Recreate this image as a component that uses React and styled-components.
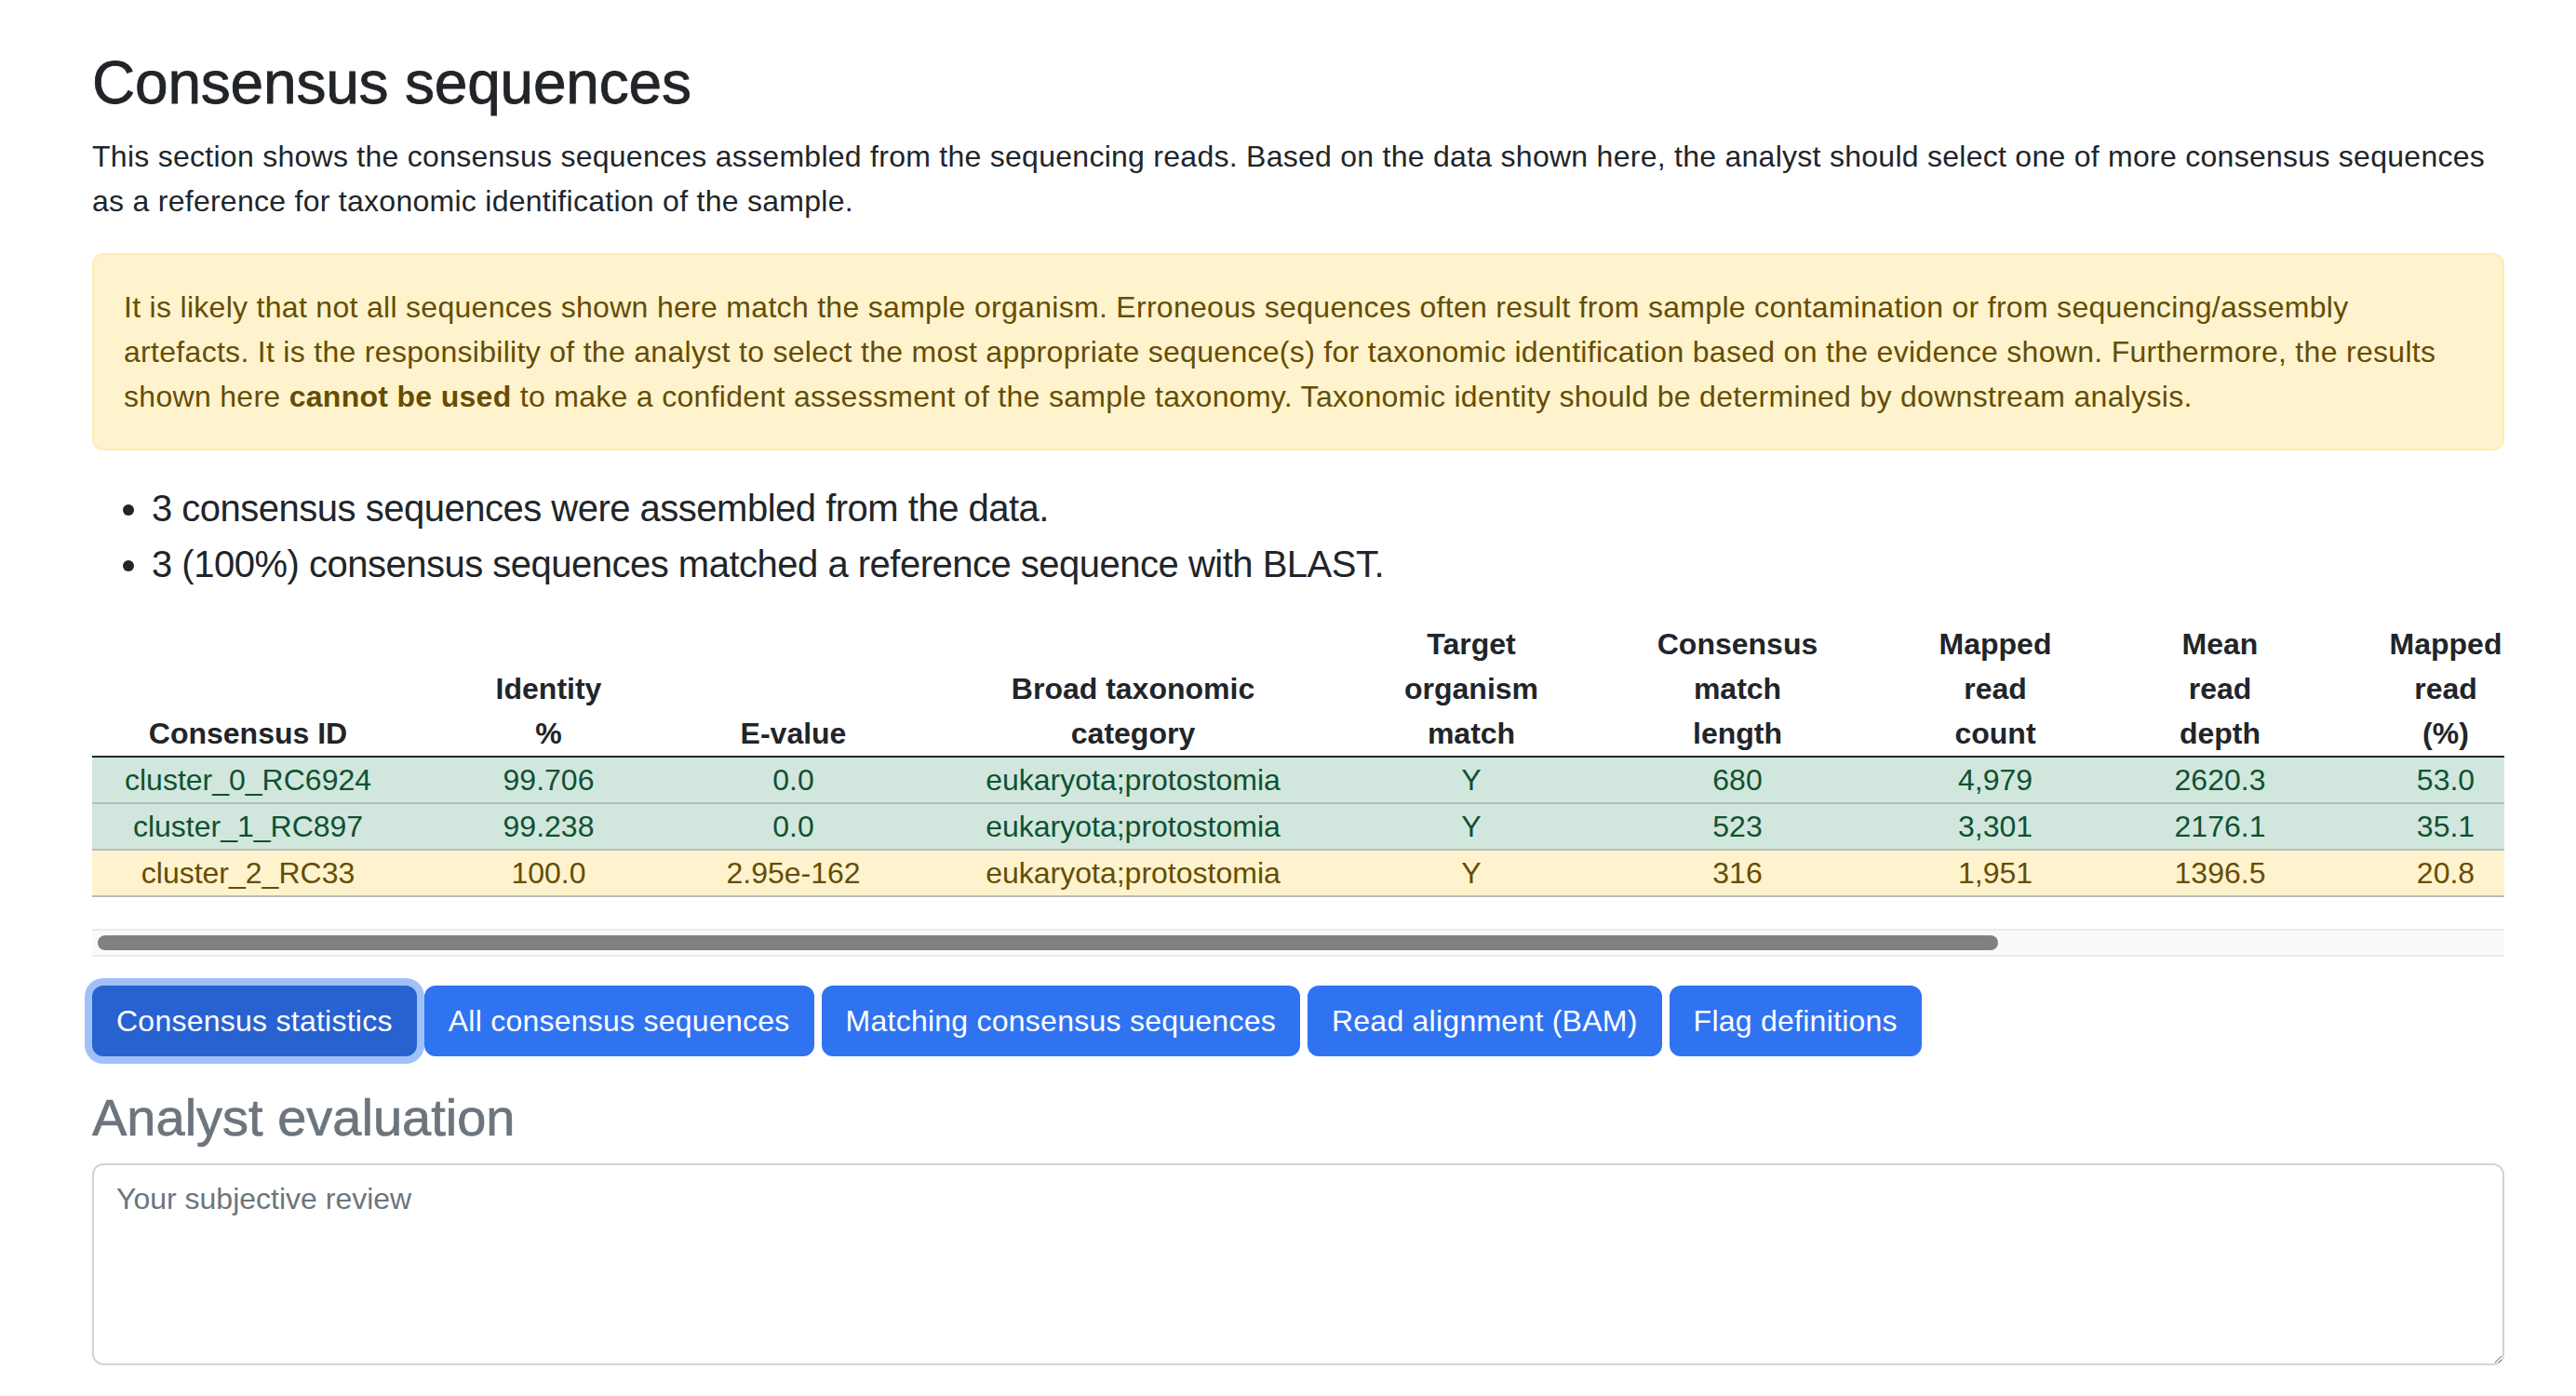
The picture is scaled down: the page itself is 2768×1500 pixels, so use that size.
import React from 'react'
import styled, { createGlobalStyle } from 'styled-components'

const GlobalStyle = createGlobalStyle`
  html, body {
    margin: 0;
    padding: 0;
    background: #ffffff;
  }
  body {
    font-family: "Liberation Sans", Arial, sans-serif;
    color: #212529;
    font-size: 32px;
    line-height: 48px;
  }
  * { box-sizing: border-box; }
`

const Page = styled.main`
  width: 2592px;
  margin-left: 99px;
  padding-top: 51px;
  padding-bottom: 40px;
`

const Title = styled.h2`
  margin: 0 0 16px;
  font-size: 64px;
  line-height: 77px;
  font-weight: 500;
  letter-spacing: -0.2px;
  -webkit-text-stroke: 0.8px currentColor;
  color: #212529;
`

const Intro = styled.p`
  margin: 0 0 32px;
  font-size: 32px;
  line-height: 48px;
  letter-spacing: 0.27px;
`

const Alert = styled.div`
  margin-bottom: 32px;
  padding: 32px;
  background: #fff3cd;
  border: 2px solid #ffecb5;
  border-radius: 12px;
  color: #664d03;
  font-size: 32px;
  line-height: 48px;
  letter-spacing: 0.3px;

  strong { font-weight: 700; }
`

const Summary = styled.ul`
  margin: 0 0 32px;
  padding-left: 64px;
  font-size: 40px;
  line-height: 60px;
  letter-spacing: -0.5px;
`

const TableScroller = styled.div`
  margin-bottom: 31px;
`

const TableViewport = styled.div`
  overflow: hidden;
`

const ScrollTrack = styled.div`
  height: 30px;
  padding: 5px 6px;
  background: #fafafa;
  border-top: 2px solid #ebebeb;
  border-bottom: 2px solid #ebebeb;
`

const ScrollThumb = styled.div`
  width: ${p => p.$ratio * 100}%;
  height: 16px;
  background: #808080;
  border-radius: 8px;
`

const Table = styled.table`
  border-collapse: collapse;
  table-layout: fixed;
  margin-bottom: 34px;
  font-size: 32px;
  line-height: 48px;
`

const HeadCell = styled.th`
  width: ${p => p.$w}px;
  padding: 0;
  vertical-align: bottom;
  text-align: center;
  font-weight: 700;
  color: #212529;
  border-bottom: 2px solid #212529;
`

const Row = styled.tr`
  background: ${p => (p.$tone === 'warning' ? '#fff3cd' : '#d1e7dd')};
  color: ${p => (p.$tone === 'warning' ? '#664d03' : '#0f5132')};
`

const Cell = styled.td`
  padding: 0;
  text-align: center;
  border-bottom: 2px solid #bababa;
  white-space: nowrap;
`

const Toolbar = styled.div`
  display: flex;
  gap: 8px;
  margin-bottom: 32px;
`

const Button = styled.button`
  font-family: "Liberation Sans", Arial, sans-serif;
  font-size: 32px;
  line-height: 48px;
  letter-spacing: 0.25px;
  padding: 12px 24px;
  color: #ffffff;
  background: ${p => (p.$active ? '#2862d1' : '#3073f1')};
  border: 2px solid ${p => (p.$active ? '#2862d1' : '#3073f1')};
  border-radius: 12px;
  box-shadow: ${p => (p.$active ? '0 0 0 8px #a0c1f8' : 'none')};
  cursor: pointer;
`

const SubTitle = styled.h3`
  margin: 0 0 16px;
  font-size: 56px;
  line-height: 67px;
  font-weight: 500;
  -webkit-text-stroke: 0.7px currentColor;
  color: #6c757d;
`

const Review = styled.textarea`
  display: block;
  width: 100%;
  height: 217px;
  padding: 12px 24px;
  font-family: "Liberation Sans", Arial, sans-serif;
  font-size: 32px;
  line-height: 48px;
  color: #212529;
  border: 2px solid #ced4da;
  border-radius: 12px;
  resize: vertical;

  &::placeholder { color: #6c757d; }
`

const columns = [
  { w: 335, label: ['Consensus ID'] },
  { w: 311, label: ['Identity', '%'] },
  { w: 215, label: ['E-value'] },
  { w: 515, label: ['Broad taxonomic', 'category'] },
  { w: 212, label: ['Target', 'organism', 'match'] },
  { w: 360, label: ['Consensus', 'match', 'length'] },
  { w: 194, label: ['Mapped', 'read', 'count'] },
  { w: 289, label: ['Mean', 'read', 'depth'] },
  { w: 196, label: ['Mapped', 'read', '(%)'] },
]

const rows = [
  { tone: 'success', cells: ['cluster_0_RC6924', '99.706', '0.0', 'eukaryota;protostomia', 'Y', '680', '4,979', '2620.3', '53.0'] },
  { tone: 'success', cells: ['cluster_1_RC897', '99.238', '0.0', 'eukaryota;protostomia', 'Y', '523', '3,301', '2176.1', '35.1'] },
  { tone: 'warning', cells: ['cluster_2_RC33', '100.0', '2.95e-162', 'eukaryota;protostomia', 'Y', '316', '1,951', '1396.5', '20.8'] },
]

const buttons = [
  'Consensus statistics',
  'All consensus sequences',
  'Matching consensus sequences',
  'Read alignment (BAM)',
  'Flag definitions',
]

export default function App() {
  const tableWidth = columns.reduce((s, c) => s + c.w, 0)
  return (
    <>
      <GlobalStyle />
      <Page>
        <Title>Consensus sequences</Title>
        <Intro>
          This section shows the consensus sequences assembled from the sequencing reads. Based on the data shown here, the analyst should select one of more consensus sequences<br />
          as a reference for taxonomic identification of the sample.
        </Intro>

        <Alert>
          It is likely that not all sequences shown here match the sample organism. Erroneous sequences often result from sample contamination or from sequencing/assembly<br />
          artefacts. It is the responsibility of the analyst to select the most appropriate sequence(s) for taxonomic identification based on the evidence shown. Furthermore, the results<br />
          shown here <strong>cannot be used</strong> to make a confident assessment of the sample taxonomy. Taxonomic identity should be determined by downstream analysis.
        </Alert>

        <Summary>
          <li>3 consensus sequences were assembled from the data.</li>
          <li>3 (100%) consensus sequences matched a reference sequence with BLAST.</li>
        </Summary>

        <TableScroller>
          <TableViewport>
            <Table style={{ width: tableWidth }}>
              <thead>
                <tr>
                  {columns.map((c, i) => (
                    <HeadCell key={i} $w={c.w}>
                      {c.label.map((l, j) => (
                        <React.Fragment key={j}>
                          {j > 0 && <br />}
                          {l}
                        </React.Fragment>
                      ))}
                    </HeadCell>
                  ))}
                </tr>
              </thead>
              <tbody>
                {rows.map((r, i) => (
                  <Row key={i} $tone={r.tone}>
                    {r.cells.map((v, j) => (
                      <Cell key={j}>{v}</Cell>
                    ))}
                  </Row>
                ))}
              </tbody>
            </Table>
          </TableViewport>
          <ScrollTrack>
            <ScrollThumb $ratio={0.7915} />
          </ScrollTrack>
        </TableScroller>

        <Toolbar>
          {buttons.map((b, i) => (
            <Button key={b} $active={i === 0}>{b}</Button>
          ))}
        </Toolbar>

        <SubTitle>Analyst evaluation</SubTitle>
        <Review placeholder="Your subjective review" />
      </Page>
    </>
  )
}
